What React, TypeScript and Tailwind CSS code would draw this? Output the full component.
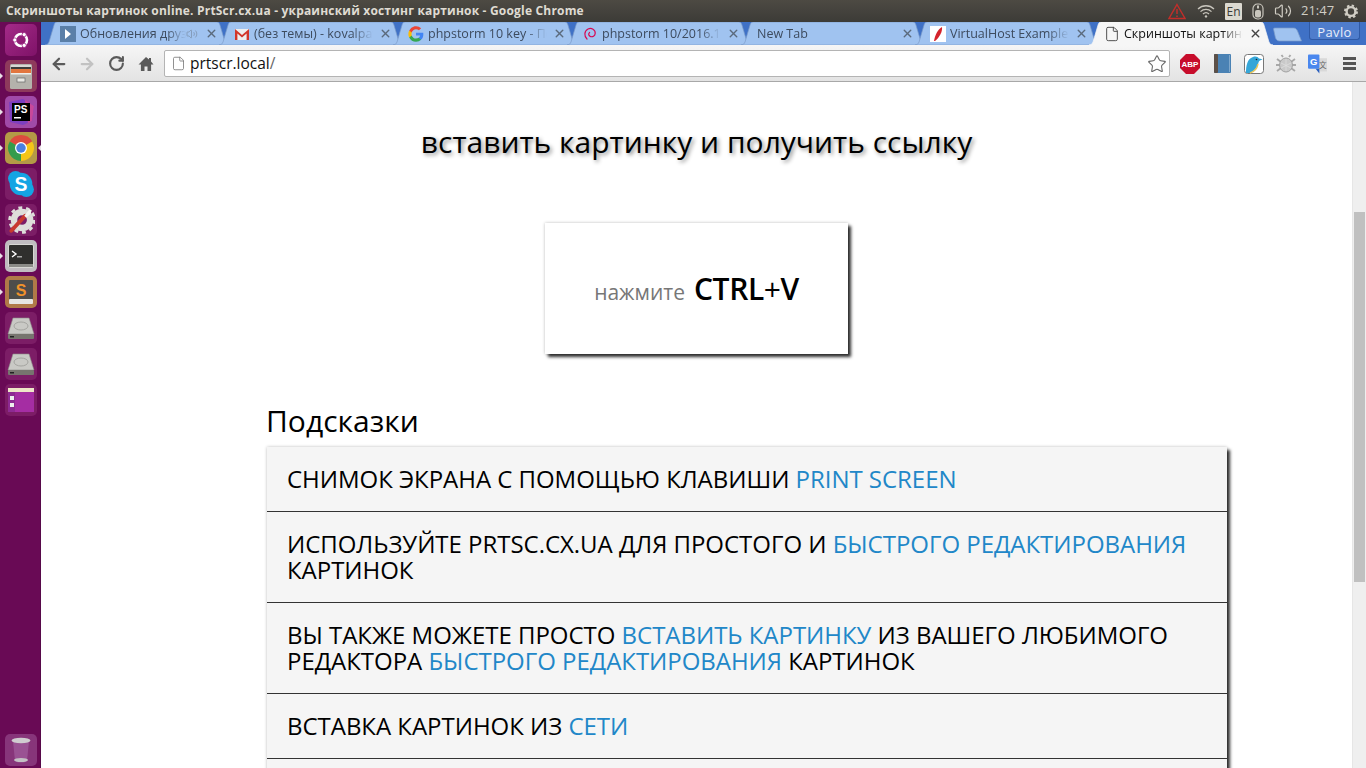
import { ArrowLeft, ArrowRight, RotateCw, Star, File, X, Volume2 } from "lucide-react";
import type { ReactNode } from "react";

const TILE = "w-[32px] h-[32px] rounded-[5px] flex items-center justify-center relative";

function LauncherItem({ tile, pip, activePip, children }: { tile: string; pip?: boolean; activePip?: boolean; children: ReactNode }) {
  return (
    <div className="h-[36px] w-[41px] flex items-center justify-center relative">
      {pip && <span className="absolute left-0 top-[15px] w-0 h-0 border-y-[3px] border-y-transparent border-l-[3px] border-l-[#e8e0e6]" />}
      {activePip && <span className="absolute right-0 top-[15px] w-0 h-0 border-y-[3px] border-y-transparent border-r-[3px] border-r-[#e8e0e6]" />}
      <div className={`${TILE} ${tile}`}>{children}</div>
    </div>
  );
}

function Drive() {
  return (
    <svg width="28" height="24" viewBox="0 0 28 24">
      <path d="M6 2h16l5 16H1z" fill="#c9c9c5" stroke="#8e8e8a" strokeWidth="0.6" />
      <ellipse cx="14" cy="10" rx="7" ry="4" fill="none" stroke="#a4a4a0" strokeWidth="1" />
      <rect x="1" y="18" width="26" height="5" rx="1" fill="#77756f" />
      <rect x="3" y="20" width="4" height="1.5" fill="#222" />
    </svg>
  );
}

function Launcher() {
  return (
    <aside className="w-[41px] h-full bg-[#690a55] border-r border-[#57094a] flex flex-col shrink-0">
      <LauncherItem tile="bg-gradient-to-br from-[#a42a88] to-[#7f1268]">
        <svg width="24" height="24" viewBox="0 0 24 24">
          <circle cx="12" cy="12" r="6" fill="none" stroke="#fff" strokeWidth="2.6" />
          <circle cx="5.800" cy="12" r="2.100" fill="#fff" stroke="#9a1f80" strokeWidth="0.8" />
          <circle cx="15.200" cy="6.600" r="2.100" fill="#fff" stroke="#9a1f80" strokeWidth="0.8" />
          <circle cx="15.200" cy="17.400" r="2.100" fill="#fff" stroke="#9a1f80" strokeWidth="0.8" />
        </svg>
      </LauncherItem>
      <LauncherItem tile="bg-[#8e3a5c]" pip>
        <svg width="24" height="27" viewBox="0 0 24 27">
          <rect x="1" y="1" width="22" height="25" rx="1.500" fill="#b4b2ac" />
          <rect x="2" y="2" width="20" height="2" fill="#d8d8d4" />
          <rect x="2" y="4" width="20" height="2" fill="#3c3c3a" />
          <rect x="2" y="6" width="20" height="4" fill="#e2763f" />
          <rect x="2" y="10" width="20" height="1.500" fill="#f0f0ec" />
          <rect x="8" y="15" width="8" height="4" fill="#e8e8e4" stroke="#666" strokeWidth="0.7" />
        </svg>
      </LauncherItem>
      <LauncherItem tile="bg-[#a04aa8]" pip>
        <svg width="28" height="28" viewBox="0 0 28 28">
          <path d="M2 4l14-3 11 7-2 15-9 4-13-3z" fill="#7d3fc0" />
          <path d="M18 2l9 6-2 15-4 2z" fill="#c8489a" />
          <rect x="5" y="5" width="18" height="18" fill="#000" />
          <rect x="7" y="19" width="7" height="1.500" fill="#fff" />
          <text x="7" y="15" fill="#fff" fontSize="10" fontWeight="700" fontFamily="'Liberation Sans', sans-serif">PS</text>
        </svg>
      </LauncherItem>
      <LauncherItem tile="bg-[#b49a46]" pip activePip>
        <svg width="28" height="28" viewBox="0 0 26 26">
          <path d="M13 13L2.600 7A12 12 0 0 1 23.400 7Z" fill="#dd4b3e" />
          <path d="M13 13L23.400 7A12 12 0 0 1 13 25Z" fill="#f5c518" />
          <path d="M13 13L13 25A12 12 0 0 1 2.600 7Z" fill="#339c4c" />
          <circle cx="13" cy="13" r="5.600" fill="#fff" />
          <circle cx="13" cy="13" r="4.400" fill="#4a80e0" />
        </svg>
      </LauncherItem>
      <LauncherItem tile="bg-[#7c1d66]">
        <svg width="28" height="28" viewBox="0 0 26 26">
          <circle cx="8" cy="8" r="7" fill="#14a5e4" />
          <circle cx="18" cy="18" r="7" fill="#14a5e4" />
          <circle cx="13" cy="13" r="10.500" fill="#14a5e4" />
          <text x="13" y="19.500" textAnchor="middle" fill="#fff" fontSize="18" fontWeight="700" fontFamily="'Liberation Sans', sans-serif">S</text>
        </svg>
      </LauncherItem>
      <LauncherItem tile="bg-[#7c1d66]">
        <svg width="28" height="28" viewBox="0 0 26 26">
          <circle cx="14" cy="13" r="7.500" fill="none" stroke="#dededa" strokeWidth="6" />
          <circle cx="14" cy="13" r="11.500" fill="none" stroke="#dededa" strokeWidth="2.600" strokeDasharray="3.600 3.600" />
          <path d="M4 23L17 9" stroke="#c8392f" strokeWidth="3.600" strokeLinecap="round" />
          <path d="M16 9l5-6 2 1-1 3-4 4z" fill="#f4f4f0" />
        </svg>
      </LauncherItem>
      <LauncherItem tile="bg-[#c0bcc0]" pip>
        <svg width="26" height="24" viewBox="0 0 26 24">
          <rect x="0.500" y="0.500" width="25" height="23" rx="1.500" fill="#2f2f2d" stroke="#d8d8d4" />
          <path d="M4 7l4 3-4 3" fill="none" stroke="#fff" strokeWidth="1.400" />
          <rect x="9" y="12" width="5" height="1.500" fill="#aaa" />
          <rect x="1" y="20" width="24" height="3" fill="#8c8c88" />
        </svg>
      </LauncherItem>
      <LauncherItem tile="bg-[#b07a48]" pip>
        <svg width="26" height="26" viewBox="0 0 26 26">
          <rect x="1" y="1" width="24" height="20" rx="1" fill="#4d4d4b" />
          <rect x="1" y="20" width="24" height="5" rx="1" fill="#e6e6e2" />
          <text x="13" y="17" textAnchor="middle" fill="#f0922a" fontSize="16" fontWeight="700" fontFamily="'Liberation Sans', sans-serif">S</text>
        </svg>
      </LauncherItem>
      <LauncherItem tile="bg-[#7c1d66]"><Drive /></LauncherItem>
      <LauncherItem tile="bg-[#7c1d66]"><Drive /></LauncherItem>
      <LauncherItem tile="bg-[#7c1d66]">
        <svg width="26" height="24" viewBox="0 0 26 24">
          <rect x="0" y="0" width="26" height="24" fill="#a52da3" />
          <rect x="0" y="0" width="26" height="4" fill="#eee7c8" />
          <rect x="0" y="4" width="7" height="20" fill="#8d2a92" />
          <rect x="2" y="8" width="4" height="4" fill="#eee" />
          <rect x="2" y="15" width="4" height="4" fill="#eee" />
        </svg>
      </LauncherItem>
      <div className="flex-1" />
      <LauncherItem tile="bg-[#87357a]">
        <svg width="22" height="28" viewBox="0 0 22 28">
          <path d="M3 5l2 20c2 2 10 2 12 0l2-20z" fill="#9a5293" />
          <ellipse cx="11" cy="4.500" rx="9.500" ry="2.800" fill="#d0ccd0" />
          <ellipse cx="11" cy="24" rx="7" ry="2" fill="#c4c0c4" />
        </svg>
      </LauncherItem>
    </aside>
  );
}

function Tray() {
  return (
    <div className="flex items-center h-full text-[#d9d5cc] shrink-0">
      <svg width="18" height="17" viewBox="0 0 18 17">
        <path d="M9 1.500L17 15.500H1z" fill="none" stroke="#c22e2a" strokeWidth="1.400" />
        <path d="M9 6v5M9 12.500v1.500" stroke="#c22e2a" strokeWidth="1.500" />
      </svg>
      <svg width="18" height="14" viewBox="0 0 18 14" className="ml-[11px]">
        <path d="M1 5a11.500 11.500 0 0 1 16 0M3.500 7.600a8 8 0 0 1 11 0M6 10a4.400 4.400 0 0 1 6 0" fill="none" stroke="#c9c6bd" strokeWidth="1.300" />
        <circle cx="9" cy="12.400" r="1.200" fill="#c9c6bd" />
      </svg>
      <span className="ml-[10px] w-[17px] h-[17px] bg-[#dcd9d0] rounded-[1px] text-[#3c3b37] text-[12px] leading-[17px] text-center">En</span>
      <svg width="12" height="17" viewBox="0 0 12 17" className="ml-[10px]">
        <rect x="1" y="1" width="10" height="15" rx="4.500" fill="none" stroke="#c9c6bd" strokeWidth="1.200" />
        <rect x="3" y="7" width="6" height="7.500" rx="2" fill="#c9c6bd" />
        <rect x="5" y="2.500" width="2" height="3" fill="#c9c6bd" />
      </svg>
      <Volume2 size={18} strokeWidth={1.600} className="ml-[10px] text-[#d0cdc4]" />
      <span className="ml-[9px] text-[13px] w-[33px] text-[#d0cdc4]">21:47</span>
      <svg width="14" height="15" viewBox="0 0 14 15" className="ml-[10px] mr-[8px]">
        <circle cx="7" cy="7.500" r="4.400" fill="none" stroke="#d0cdc4" strokeWidth="2.400" />
        <circle cx="7" cy="7.500" r="6" fill="none" stroke="#d0cdc4" strokeWidth="2" strokeDasharray="2.400 2.300" />
      </svg>
    </div>
  );
}

function Favicon({ kind }: { kind: string }) {
  if (kind === "video")
    return (
      <span className="w-[16px] h-[16px] bg-[#5a7fa8] flex items-center justify-center shrink-0">
        <span className="w-0 h-0 border-y-[5px] border-y-transparent border-l-[6px] border-l-white" />
      </span>
    );
  if (kind === "gmail")
    return (
      <svg width="16" height="16" viewBox="0 0 16 16" className="shrink-0">
        <rect x="1" y="3" width="14" height="11" fill="#eee" />
        <path d="M1 14V3l7 6 7-6v11h-2.400V7.400L8 11.600 3.400 7.400V14z" fill="#d2362b" />
      </svg>
    );
  if (kind === "google")
    return (
      <svg width="16" height="16" viewBox="0 0 24 24" className="shrink-0">
        <path d="M23 12.300c0-.8-.1-1.600-.2-2.300H12v4.400h6.200a5.300 5.300 0 0 1-2.300 3.500v2.900h3.700c2.200-2 3.400-5 3.400-8.500z" fill="#4285f4" />
        <path d="M12 23.500c3.100 0 5.700-1 7.600-2.800l-3.700-2.900c-1 .7-2.300 1.100-3.900 1.100-3 0-5.500-2-6.400-4.800H1.800v3A11.500 11.500 0 0 0 12 23.500z" fill="#34a853" />
        <path d="M5.600 14.100a6.900 6.900 0 0 1 0-4.300v-3H1.800a11.500 11.500 0 0 0 0 10.300z" fill="#fbbc05" />
        <path d="M12 4.800c1.700 0 3.200.6 4.400 1.700l3.300-3.300A11.500 11.500 0 0 0 1.800 6.700l3.800 3c.9-2.800 3.400-4.900 6.400-4.900z" fill="#ea4335" />
      </svg>
    );
  if (kind === "debian")
    return (
      <svg width="16" height="16" viewBox="0 0 16 16" className="shrink-0">
        <path d="M5 13C2 10.500 2 5 6 3c3.500-1.600 7.500.6 7.200 4.400C13 10 10.500 11.400 8.200 10.400 6.400 9.500 6.200 7.400 7.600 6.400" fill="none" stroke="#d70a53" strokeWidth="1.200" strokeLinecap="round" />
      </svg>
    );
  if (kind === "feather")
    return (
      <svg width="16" height="16" viewBox="0 0 16 16" className="shrink-0">
        <rect width="16" height="16" fill="#fff" />
        <path d="M4 15C5 9 8 3 12 1c.6 4-2 10-7 14z" fill="#d4232c" />
      </svg>
    );
  if (kind === "doc") return <File size={16} strokeWidth={1.400} className="shrink-0 text-[#444]" />;
  return null;
}

function Tab({ kind, title, active, audio }: { kind?: string; title: string; active?: boolean; audio?: boolean }) {
  return (
    <div className={`relative h-[23px] w-[174px] shrink-0 flex items-center pr-[3px] ${kind ? "pl-[13px]" : "pl-[10px]"}`}>
      <svg className="absolute left-[-2px] top-0 w-[184px]" height="23" viewBox="0 0 183 23" preserveAspectRatio="none">
        <path
          d="M0 23 C2 23 3 22 4 20 L9 3 C9.500 1 10.500 0 12 0 L171 0 C172.500 0 173.500 1 174 3 L179 20 C180 22 181 23 183 23 Z"
          fill={active ? "#f6f6f6" : "#a0c3f0"}
          stroke={active ? "#f6f6f6" : "#7c9cc8"}
          strokeWidth="0.7"
        />
      </svg>
      <div className="relative flex items-center w-full">
        {kind && <Favicon kind={kind} />}
        <span
          className={`flex-1 ml-[4px] min-w-0 overflow-hidden whitespace-nowrap text-[12.5px] leading-[18px] [mask-image:linear-gradient(to_right,#000_82%,transparent)] ${active ? "text-[#111]" : "text-[#3d4b5e]"}`}
        >
          {title}
        </span>
        {audio && <Volume2 size={12} strokeWidth={1.600} className="shrink-0 mr-[1px] text-[#7d93ad]" />}
        <X size={13} strokeWidth={2.600} className={`shrink-0 ml-[6px] ${active ? "text-[#444]" : "text-[#5a6a7c]"}`} />
      </div>
    </div>
  );
}

function TabStrip() {
  return (
    <div className="h-[23px] bg-[#3f71c6] flex items-stretch relative shrink-0 pl-[6px]">
      <Tab kind="video" title="Обновления друзей" audio />
      <Tab kind="gmail" title="(без темы) - kovalpavlo" />
      <Tab kind="google" title="phpstorm 10 key - Поиск" />
      <Tab kind="debian" title="phpstorm 10/2016.1 on" />
      <Tab title="New Tab" />
      <Tab kind="feather" title="VirtualHost Examples" />
      <Tab kind="doc" title="Скриншоты картинок" active />
      <div className="relative ml-[7px] self-end mb-[3px]">
        <svg width="31" height="15" viewBox="0 0 30 15">
          <path d="M1 2C1 1 2 1 3 1h18c2 0 3 1 4 3l4 10H7C5 14 4 13 3 11z" fill="#a0c3f0" stroke="#7c9cc8" strokeWidth="0.7" />
        </svg>
      </div>
      <div className="flex-1" />
      <div className="h-[18px] w-[51px] mr-[6px] pt-[2px] bg-[#4f7dcc] border border-t-0 border-[#2f5aa6] rounded-b-[3px] text-[#e8eefa] text-[13px] leading-[17px] text-center tracking-[0.4px]">
        Pavlo
      </div>
    </div>
  );
}

function Toolbar() {
  return (
    <div className="h-[37px] pt-[1px] shrink-0 bg-gradient-to-b from-[#f6f6f6] to-[#e3e3e3] border-b border-[#a8a8a8] flex items-center text-[#555]">
      <ArrowLeft size={18} strokeWidth={3} className="ml-[9px] text-[#5a5a5a]" />
      <ArrowRight size={18} strokeWidth={3} className="ml-[10px] text-[#c2c2c2]" />
      <RotateCw size={17} strokeWidth={3} className="ml-[12px] text-[#5a5a5a]" />
      <svg width="16" height="16" viewBox="0 0 16 16" className="ml-[13px]">
        <path d="M8 1L0.500 8.400h2.400V15h3.600v-4.400h3V15h3.600V8.400h2.400L13 5.400V2h-2v1.400z" fill="#5a5a5a" />
      </svg>
      <div className="ml-[10px] w-[1006px] h-[27px] bg-white border border-[#b4b4b4] rounded-[2px] flex items-center pl-[6px]">
        <File size={15} strokeWidth={1.300} className="text-[#777]" />
        <span className="ml-[4px] text-[15.5px] text-[#111]">
          prtscr.local<span className="text-[#666]">/</span>
        </span>
        <div className="flex-1" />
        <Star size={20} strokeWidth={1.300} className="mr-[2px] text-[#666]" />
      </div>
      <svg width="20" height="20" viewBox="0 0 20 20" className="ml-[10px]">
        <path d="M6 0h8l6 6v8l-6 6H6l-6-6V6z" fill="#c70d2c" />
        <text x="10" y="13" textAnchor="middle" fill="#fff" fontSize="8" fontWeight="700" fontFamily="'Liberation Sans', sans-serif">ABP</text>
      </svg>
      <svg width="17" height="19" viewBox="0 0 17 19" className="ml-[14px]">
        <rect x="0" y="0" width="17" height="19" rx="1" fill="#4a82b4" />
        <rect x="0" y="0" width="4" height="19" rx="1" fill="#5c5048" />
        <rect x="15" y="1" width="1" height="17" fill="#7fa8cc" />
      </svg>
      <svg width="20" height="20" viewBox="0 0 20 20" className="ml-[13px]">
        <rect x="0.500" y="0.500" width="19" height="19" rx="3" fill="#fff" stroke="#777" />
        <path d="M2 19C2 12 3 5 9 3c3-1 5 0 6 1.500 2 .5 3 .8 3.500 1-2 .5-3.500 1-4 3C13.500 14 9 18 6 19z" fill="#35a6d8" />
        <path d="M6 19c3-1 7-4 8-9" stroke="#e8c65a" strokeWidth="1.400" fill="none" />
        <circle cx="12.500" cy="5.500" r="0.800" fill="#123" />
      </svg>
      <svg width="20" height="20" viewBox="0 0 20 20" className="ml-[12px]">
        <path d="M1 5l4 3M19 5l-4 3M0 11h4M20 11h-4M1 17l4-3M19 17l-4-3M7 3L5.500 1M13 3l1.500-2" stroke="#a8a8a8" strokeWidth="1.800" />
        <ellipse cx="10" cy="11" rx="6.500" ry="7" fill="#c9c9c9" stroke="#a2a2a2" />
        <path d="M10 5v12M5 9l10 5M15 9L5 14" stroke="#dedede" strokeWidth="0.800" />
      </svg>
      <svg width="19" height="20" viewBox="0 0 20 20" className="ml-[12px]">
        <path d="M9 4h11v14H12z" fill="#d9d9d9" />
        <rect x="0" y="0" width="12" height="15" rx="1" fill="#4a87ee" />
        <path d="M8 15l4 5v-5z" fill="#2a5fbe" />
        <text x="6" y="11" textAnchor="middle" fill="#fff" fontSize="10" fontWeight="700" fontFamily="'Liberation Sans', sans-serif">G</text>
        <text x="15.500" y="14" textAnchor="middle" fill="#666" fontSize="8" fontFamily="'Noto Sans CJK SC', sans-serif">文</text>
      </svg>
      <div className="ml-[16px] w-[13px] flex flex-col gap-[2px]">
        <span className="h-[3px] bg-[#555]" />
        <span className="h-[3px] bg-[#555]" />
        <span className="h-[3px] bg-[#555]" />
      </div>
    </div>
  );
}

function Hint({ children }: { children: ReactNode }) {
  return <li className="px-[20px] py-[19px] border-b border-[#333] text-[24px] leading-[26px] tracking-[-0.03px] text-black">{children}</li>;
}

function Link({ children }: { children: ReactNode }) {
  return <a className="text-[#2187c8]">{children}</a>;
}

function Page() {
  return (
    <div className="flex-1 min-h-0 flex bg-white">
      <main className="flex-1 min-w-0 overflow-hidden font-['Open_Sans',sans-serif]">
        <h1 className="pt-[39px] text-center text-[30px] leading-[41px] text-black [text-shadow:2px_2px_4px_rgba(0,0,0,0.45)]">
          вставить картинку и получить ссылку
        </h1>
        <div className="mt-[61px] mx-auto w-[303px] h-[131px] bg-white flex items-center justify-center gap-[9px] shadow-[0_0_3px_rgba(0,0,0,0.25),3px_3px_3px_#333]">
          <span className="text-[21px] text-[#777] mt-[9px]">нажмите</span>
          <span className="text-[30px] font-semibold text-black tracking-[-0.4px]">
            CTRL<span className="font-normal">+</span>V
          </span>
        </div>
        <h2 className="mt-[46px] ml-[225px] text-[30px] leading-[41px] text-black">Подсказки</h2>
        <ul className="mt-[6px] ml-[226px] w-[960px] bg-[#f5f5f5] shadow-[0_0_3px_rgba(0,0,0,0.25),3px_3px_3px_#333]">
          <Hint>
            СНИМОК ЭКРАНА С ПОМОЩЬЮ КЛАВИШИ <Link>PRINT SCREEN</Link>
          </Hint>
          <Hint>
            ИСПОЛЬЗУЙТЕ PRTSC.CX.UA ДЛЯ ПРОСТОГО И <Link>БЫСТРОГО РЕДАКТИРОВАНИЯ</Link> КАРТИНОК
          </Hint>
          <Hint>
            ВЫ ТАКЖЕ МОЖЕТЕ ПРОСТО <Link>ВСТАВИТЬ КАРТИНКУ</Link> ИЗ ВАШЕГО ЛЮБИМОГО РЕДАКТОРА <Link>БЫСТРОГО РЕДАКТИРОВАНИЯ</Link> КАРТИНОК
          </Hint>
          <Hint>
            ВСТАВКА КАРТИНОК ИЗ <Link>СЕТИ</Link>
          </Hint>
          <Hint>&nbsp;</Hint>
        </ul>
      </main>
      {/* scrollbar */}
      <div className="w-[14px] shrink-0 bg-[#efefef] border-l border-[#e6e6e6] pt-[130px] pl-[1px]">
        <div className="w-[11px] h-[370px] bg-[#c0c0c0]" />
      </div>
    </div>
  );
}

export default function App() {
  return (
    <div className="w-[1366px] h-[768px] overflow-hidden flex flex-col font-['Open_Sans',sans-serif]">
      <header className="h-[22px] shrink-0 bg-gradient-to-b from-[#4d4a43] to-[#3c3b37] flex items-center justify-between pl-[6px]">
        <span className="text-[12px] font-bold tracking-[0.19px] text-[#dfdbd2] whitespace-nowrap">
          Скриншоты картинок online. PrtScr.cx.ua - украинский хостинг картинок - Google Chrome
        </span>
        <Tray />
      </header>
      <div className="flex-1 min-h-0 flex">
        <Launcher />
        <div className="flex-1 min-w-0 flex flex-col">
          <TabStrip />
          <Toolbar />
          <Page />
        </div>
      </div>
    </div>
  );
}
